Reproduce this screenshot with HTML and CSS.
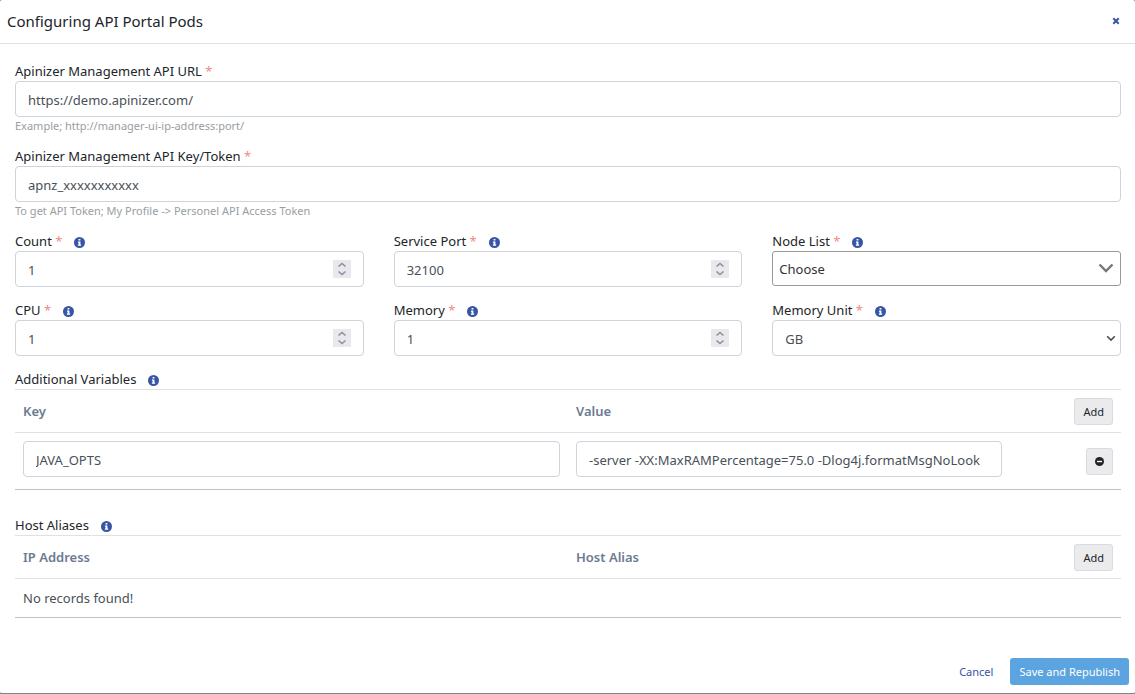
FILE: index.html
```html
<!DOCTYPE html>
<html lang="en">
<head>
    <meta charset="UTF-8">
    <meta name="viewport" content="width=device-width, initial-scale=1.0">
    <title>Configuring API Portal Pods</title>
    <link rel="stylesheet" href="styles.css">
</head>
<body>
    <!-- shared icons -->
    <svg class="sprite" aria-hidden="true">
        <symbol id="icon-info" viewBox="0 0 12 12">
            <circle cx="6" cy="6" r="6" fill="#3655a5"/>
            <path d="M5 2.2h2v1.7H5zM4.3 4.9H7v3.4h.8v1.3H4.2V8.3H5V6.2h-.7z" fill="#fff"/>
        </symbol>
        <symbol id="icon-stepper" viewBox="0 0 18 18">
            <path d="M0 0h18v18H0z" fill="#e9e9ed"/>
            <path d="M5.5 6.5L9 3.5l3.5 3M5.5 11.5l3.5 3 3.5-3" fill="none" stroke="#8f8f9d" stroke-width="1.6"/>
        </symbol>
    </svg>

    <form class="dialog">
        <header class="dialog-header">
            <h1>Configuring API Portal Pods</h1>
            <button type="button" class="close-button" aria-label="Close">
                <svg width="8" height="8" viewBox="0 0 8 8"><path d="M1.3 1.3l5.4 5.4M6.7 1.3L1.3 6.7" stroke="#3655a5" stroke-width="2"/></svg>
            </button>
        </header>

        <div class="dialog-body">
            <div class="form-group with-help">
                <label for="apiUrl">Apinizer Management API URL <span class="required">*</span></label>
                <input type="text" class="form-control" id="apiUrl" value="https://demo.apinizer.com/">
                <small>Example; http://manager-ui-ip-address:port/</small>
            </div>
            <div class="form-group with-help">
                <label for="apiToken">Apinizer Management API Key/Token <span class="required">*</span></label>
                <input type="text" class="form-control" id="apiToken" value="apnz_xxxxxxxxxxx">
                <small>To get API Token; My Profile -&gt; Personel API Access Token</small>
            </div>

            <div class="form-row">
                <div class="form-group">
                    <label for="count">Count <span class="required">*</span><svg class="info"><use href="#icon-info"/></svg></label>
                    <div class="control-wrap">
                        <input type="number" class="form-control" id="count" value="1">
                        <svg class="stepper"><use href="#icon-stepper"/></svg>
                    </div>
                </div>
                <div class="form-group">
                    <label for="servicePort">Service Port <span class="required">*</span><svg class="info"><use href="#icon-info"/></svg></label>
                    <div class="control-wrap">
                        <input type="number" class="form-control" id="servicePort" value="32100">
                        <svg class="stepper"><use href="#icon-stepper"/></svg>
                    </div>
                </div>
                <div class="form-group">
                    <label for="nodeList">Node List <span class="required">*</span><svg class="info"><use href="#icon-info"/></svg></label>
                    <div class="control-wrap">
                        <select class="form-control node-list" id="nodeList">
                            <option>Choose</option>
                        </select>
                        <svg class="node-arrow" viewBox="0 0 16 10"><path d="M1.5 1.5L8 8l6.5-6.5" fill="none" stroke="#777" stroke-width="2.4"/></svg>
                    </div>
                </div>
                <div class="form-group">
                    <label for="cpu">CPU <span class="required">*</span><svg class="info"><use href="#icon-info"/></svg></label>
                    <div class="control-wrap">
                        <input type="number" class="form-control" id="cpu" value="1">
                        <svg class="stepper"><use href="#icon-stepper"/></svg>
                    </div>
                </div>
                <div class="form-group">
                    <label for="memory">Memory <span class="required">*</span><svg class="info"><use href="#icon-info"/></svg></label>
                    <div class="control-wrap">
                        <input type="number" class="form-control" id="memory" value="1">
                        <svg class="stepper"><use href="#icon-stepper"/></svg>
                    </div>
                </div>
                <div class="form-group">
                    <label for="memoryUnit">Memory Unit <span class="required">*</span><svg class="info"><use href="#icon-info"/></svg></label>
                    <div class="control-wrap">
                        <select class="form-control" id="memoryUnit">
                            <option>GB</option>
                        </select>
                        <svg class="unit-arrow" viewBox="0 0 10 7"><path d="M1.2 1.2L5 5l3.8-3.8" fill="none" stroke="#495057" stroke-width="1.6"/></svg>
                    </div>
                </div>
            </div>

            <section class="table-section">
                <h2 id="variablesTitle">Additional Variables<svg class="info"><use href="#icon-info"/></svg></h2>
                <table aria-labelledby="variablesTitle">
                    <thead>
                        <tr>
                            <th class="col-first">Key</th>
                            <th class="col-second">Value</th>
                            <th class="col-action"><button type="button" class="btn btn-light">Add</button></th>
                        </tr>
                    </thead>
                    <tbody>
                        <tr class="input-row">
                            <td><input type="text" class="form-control" aria-label="Key" value="JAVA_OPTS"></td>
                            <td><input type="text" class="form-control" aria-label="Value" value="-server -XX:MaxRAMPercentage=75.0 -Dlog4j.formatMsgNoLook"></td>
                            <td class="col-action">
                                <button type="button" class="btn btn-light" aria-label="Remove">
                                    <svg width="9" height="9" viewBox="0 0 9 9"><circle cx="4.5" cy="4.5" r="4.5" fill="#212529"/><path d="M2 4.5h5" stroke="#fff" stroke-width="1.4"/></svg>
                                </button>
                            </td>
                        </tr>
                    </tbody>
                </table>
            </section>

            <section class="table-section">
                <h2 id="aliasesTitle">Host Aliases<svg class="info"><use href="#icon-info"/></svg></h2>
                <table aria-labelledby="aliasesTitle">
                    <thead>
                        <tr>
                            <th class="col-first">IP Address</th>
                            <th class="col-second">Host Alias</th>
                            <th class="col-action"><button type="button" class="btn btn-light">Add</button></th>
                        </tr>
                    </thead>
                    <tbody>
                        <tr>
                            <td colspan="3">No records found!</td>
                        </tr>
                    </tbody>
                </table>
            </section>
        </div>

        <footer class="dialog-footer">
            <button type="button" class="btn btn-link">Cancel</button>
            <button type="submit" class="btn btn-primary">Save and Republish</button>
        </footer>
    </form>
</body>
</html>
```
FILE: styles.css
```css
* {
    margin: 0;
    padding: 0;
    box-sizing: border-box;
}
body {
    background-color: #808286;
    color: #212529;
    font-family: "Segoe UI", "Noto Sans", sans-serif;
    font-size: 13px;
    line-height: 20px;
}
.sprite {
    display: none;
}
.dialog {
    display: flex;
    flex-direction: column;
    min-height: 100vh;
    background-color: #fff;
    border-bottom: 1px solid #808286;
    border-radius: 2px;
}
.dialog-header {
    display: flex;
    justify-content: space-between;
    align-items: center;
    padding: 11px 15px 12px 7px;
    border-bottom: 1px solid #dee2e6;
}
.dialog-header h1 {
    font-size: 15px;
    font-weight: 400;
}
.close-button {
    display: flex;
    border: none;
    background: none;
    cursor: pointer;
}
.dialog-body {
    flex: 1;
    padding: 17px 14px 0 15px;
}

/* form fields */
.form-group {
    margin-bottom: 13px;
}
.form-group label {
    display: block;
}
.form-group small {
    display: block;
    font-size: 11px;
    line-height: 18px;
    color: #9a9da1;
}
.with-help {
    margin-bottom: 11px;
}
.form-row {
    display: grid;
    grid-template-columns: repeat(3, 1fr);
    column-gap: 30px;
}
.form-control {
    display: block;
    width: 100%;
    height: 36px;
    padding: 2px 12px 0;
    border: 1px solid #ced4da;
    border-radius: 4px;
    background-color: #fff;
    color: #495057;
    font-family: inherit;
    font-size: 13px;
    outline: none;
    appearance: none;
}
.form-control:focus {
    border-color: #5ba4e0;
}
input[type="number"] {
    appearance: textfield;
}
.required {
    color: #f08a84;
}
.info {
    width: 11px;
    height: 11px;
    margin-left: 12px;
    vertical-align: -2px;
}
.control-wrap {
    position: relative;
}
.control-wrap svg {
    position: absolute;
    pointer-events: none;
}
.stepper {
    top: 9px;
    right: 13px;
    width: 18px;
    height: 18px;
}
.node-list {
    height: 35px;
    padding: 0 6px;
    border-color: #999;
    border-radius: 3px;
    color: #333;
}
.node-arrow {
    top: 12px;
    right: 7px;
    width: 16px;
    height: 10px;
}
.unit-arrow {
    top: 15px;
    right: 5px;
    width: 10px;
    height: 7px;
}

/* tables */
.table-section {
    margin-bottom: 25px;
}
.table-section h2 {
    font-size: 13px;
    font-weight: 400;
}
table {
    width: 100%;
    border-spacing: 0;
    table-layout: fixed;
    border-top: 1px solid #dee2e6;
    border-bottom: 1px solid #c0c2c5;
}
th {
    height: 43px;
    padding: 0 8px;
    border-bottom: 1px solid #dee2e6;
    color: #6c7a91;
    font-weight: 600;
    text-align: left;
}
td {
    height: 38px;
    padding: 0 8px;
    color: #495057;
}
.input-row td {
    height: 56px;
}
.input-row .form-control {
    margin-bottom: 4px;
}
.col-first {
    width: 50%;
}
.col-second {
    width: 40%;
}
.col-action {
    text-align: right;
}

/* buttons */
.btn {
    height: 27px;
    padding: 0 8px;
    border: 1px solid transparent;
    border-radius: 3px;
    background: none;
    font-family: inherit;
    font-size: 11px;
    cursor: pointer;
    vertical-align: middle;
}
.btn-light {
    border-color: #dadae0;
    background-color: #ebebed;
    color: #212529;
}
.btn-link {
    color: #3655a5;
}
.btn-primary {
    background-color: #5ba4e0;
    color: #fff;
}
.dialog-footer {
    display: flex;
    justify-content: flex-end;
    gap: 8px;
    padding: 8px 6px;
}
```
